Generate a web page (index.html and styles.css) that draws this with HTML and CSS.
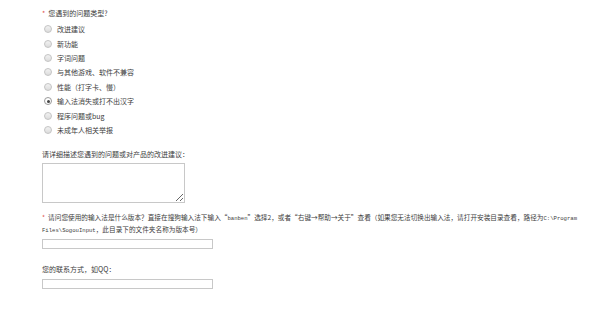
FILE: index.html
```html
<!DOCTYPE html>
<html lang="zh-CN">
  <head>
    <meta charset="UTF-8" />
    <title>问题反馈</title>
    <link rel="stylesheet" href="styles.css">
  </head>
  <body>
    <form class="feedback-form">
      <div class="field">
        <div class="field-label"><span class="required">*</span>您遇到的问题类型?</div>
        <ul class="radio-list">
          <li><span class="radio"></span>改进建议</li>
          <li><span class="radio"></span>新功能</li>
          <li><span class="radio"></span>字词问题</li>
          <li><span class="radio"></span>与其他游戏、软件不兼容</li>
          <li><span class="radio"></span>性能（打字卡、慢）</li>
          <li><span class="radio checked"></span>输入法消失或打不出汉字</li>
          <li><span class="radio"></span>程序问题或bug</li>
          <li><span class="radio"></span>未成年人相关举报</li>
        </ul>
      </div>

      <div class="field field-desc">
        <div class="field-label">请详细描述您遇到的问题或对产品的改进建议：</div>
        <textarea class="text-area"></textarea>
      </div>

      <div class="field field-version">
        <div class="field-label long-label"><span class="required">*</span>请问您使用的输入法是什么版本？直接在搜狗输入法下输入“<span class="latin">banben</span>”选择2，或者“右键→帮助→关于”查看（如果您无法切换出输入法，请打开安装目录查看，路径为<span class="latin">C:\Program</span> <span class="latin">Files\SogouInput</span>，此目录下的文件夹名称为版本号）</div>
        <input class="text-input" type="text" />
      </div>

      <div class="field field-contact">
        <div class="field-label">您的联系方式，如QQ：</div>
        <input class="text-input" type="text" />
      </div>
    </form>
  </body>
</html>
```

FILE: styles.css
```css
body {
  margin: 0;
  background: #ffffff;
  font-family: "Noto Sans CJK SC", sans-serif;
  color: #3c3c3c;
}

.feedback-form {
  padding: 7px 0 0 42px;
  width: 540px;
  font-size: 7px;
}

.field-label {
  line-height: 12px;
}

.required {
  color: #e0504a;
  margin-right: 3px;
}

.radio-list {
  list-style: none;
  margin: 3px 0 0 0;
  padding: 0 0 0 2px;
}

.radio-list li {
  display: flex;
  align-items: center;
  height: 14.4px;
}

.radio {
  width: 6px;
  height: 6px;
  border-radius: 50%;
  border: 1px solid #c4c4c4;
  background: linear-gradient(#f2f2f2, #dcdcdc);
  margin-right: 5px;
  position: relative;
}

.radio.checked {
  background: #ffffff;
  border-color: #9a9a9a;
}

.radio.checked::after {
  content: "";
  position: absolute;
  left: 1.5px;
  top: 1.5px;
  width: 3px;
  height: 3px;
  border-radius: 50%;
  background: #444444;
}

.field-desc {
  margin-top: 11px;
}

.text-area {
  display: block;
  width: 143px;
  height: 40px;
  margin: 3px 0 0 0;
  padding: 0;
  border: 1px solid #c8c8c8;
  box-sizing: border-box;
  resize: vertical;
}

.field-version {
  margin-top: 8px;
}

.long-label {
  font-size: 6.65px;
}

.latin {
  font-family: "Liberation Mono", monospace;
  font-size: 5.6px;
  line-height: 1;
}

.text-input {
  display: block;
  width: 171px;
  height: 10px;
  margin: 4px 0 0 0;
  padding: 0;
  border: 1px solid #c8c8c8;
  box-sizing: border-box;
}

.field-contact {
  margin-top: 14px;
}
```
